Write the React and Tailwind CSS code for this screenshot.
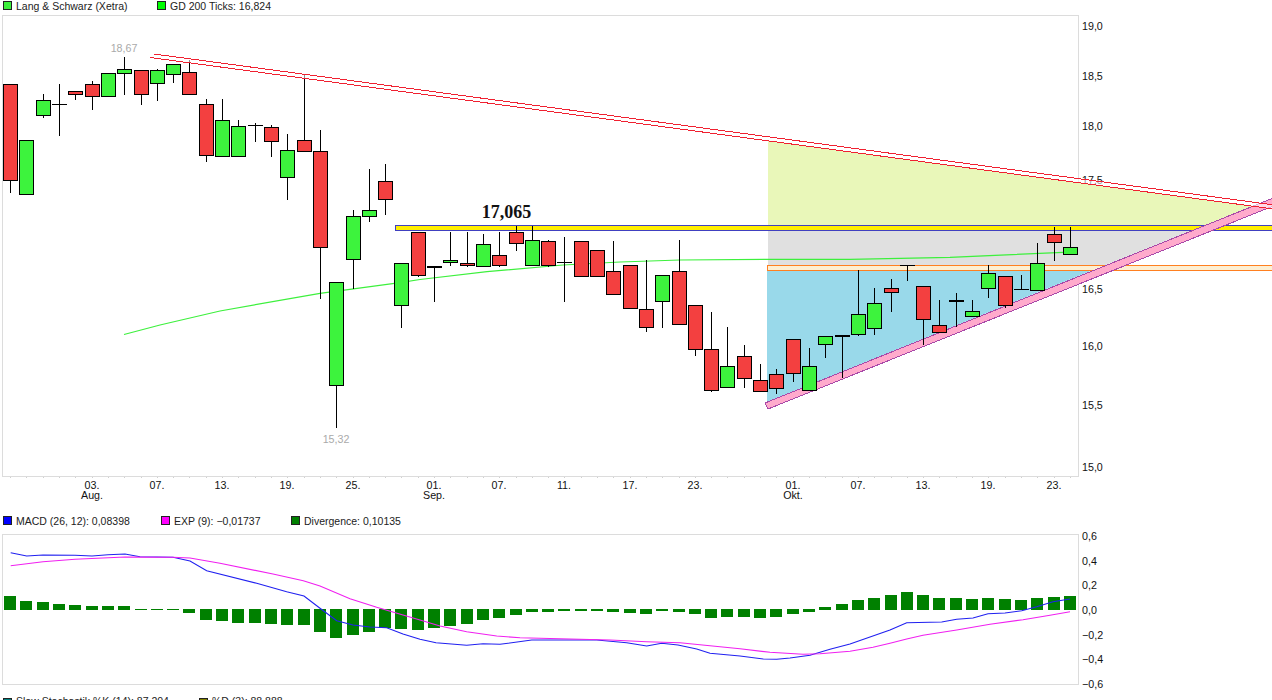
// Chartbild: Kerzen, Trendlinien und MACD
const CANDLES = [
  // x, Docht oben, Körper oben, Körper unten, Docht unten, Farbe
  [10.5, 84, 84.5, 180.5, 193, "r"], [26.5, 140, 140.5, 194, 194, "g"], [43.5, 94, 100.5, 115.5, 118, "g"],
  [59.5, 84, 104.5, 104.5, 136, "d"], [75.5, 91, 91.5, 94.5, 100, "r"], [92.5, 81, 84.5, 96.5, 110, "r"],
  [108.5, 73, 73.5, 96.5, 97, "g"], [124.5, 56.5, 69.5, 73.5, 95, "g"], [141.5, 70, 70.5, 94.5, 105, "r"],
  [157.5, 69, 70.5, 83.5, 101, "g"], [173.5, 64, 64.5, 74.5, 83, "g"], [189.5, 60, 72.5, 94.5, 95, "r"],
  [206.5, 99, 104.5, 155.5, 162, "r"], [222.5, 99, 120.5, 156.5, 157, "g"], [238.5, 120, 126.5, 156.5, 157, "g"],
  [255.5, 123, 125.5, 125.5, 142, "d"], [271.5, 125, 127.5, 141.5, 157, "r"], [287.5, 134, 150.5, 177.5, 200, "g"],
  [304.5, 75, 140.5, 151.5, 152, "r"], [320.5, 130, 151.5, 247.5, 299, "r"], [336.5, 282, 282.5, 385.5, 427.5, "g"],
  [353.5, 210, 216.5, 259.5, 289, "g"], [369.5, 169, 210.5, 216.5, 222, "g"], [385.5, 164, 181.5, 199.5, 215, "r"],
  [401.5, 263, 263.5, 305.5, 328, "g"], [418.5, 232, 232.5, 275.5, 277, "r"], [434.5, 266, 266.5, 267.5, 302, "d"],
  [450.5, 232, 260.5, 262.5, 266, "g"], [467.5, 232, 263.5, 265.5, 267, "r"], [483.5, 234, 244.5, 266.5, 267, "g"],
  [499.5, 232, 255.5, 265.5, 267, "r"], [516.5, 226, 232.5, 243.5, 251, "r"], [532.5, 226, 240.5, 265.5, 266, "g"],
  [548.5, 240, 241.5, 265.5, 267, "r"], [564.5, 237, 262.5, 262.5, 302, "d"], [581.5, 241, 241.5, 276.5, 277, "r"],
  [597.5, 250, 250.5, 276.5, 277, "r"], [613.5, 241, 271.5, 294.5, 295, "r"], [630.5, 265, 265.5, 308.5, 309, "r"],
  [646.5, 260, 309.5, 327.5, 332, "r"], [662.5, 275, 275.5, 301.5, 328, "g"], [679.5, 240, 271.5, 324.5, 325, "r"],
  [695.5, 305, 305.5, 349.5, 356, "r"], [711.5, 312, 349.5, 390.5, 392, "r"], [727.5, 327, 366.5, 387.5, 388, "g"],
  [744.5, 345, 356.5, 378.5, 388, "r"], [760.5, 364, 380.5, 391.5, 392, "r"], [776.5, 369, 374.5, 388.5, 394, "r"],
  [793.5, 339, 339.5, 373.5, 382, "r"], [809.5, 348, 366.5, 390.5, 391, "g"], [825.5, 336, 336.5, 344.5, 358, "g"],
  [842.5, 335, 335, 336.5, 378, "d"], [858.5, 270, 314.5, 334.5, 336, "g"], [874.5, 288, 303.5, 328.5, 334.5, "g"],
  [891.5, 279, 288.5, 292.5, 312, "r"], [907.5, 265, 265.5, 265.5, 281, "d"], [923.5, 286, 286.5, 319.5, 345, "r"],
  [939.5, 300, 325.5, 332.5, 333, "r"], [956.5, 293, 300.5, 301.5, 327, "d"], [972.5, 300, 311.5, 316.5, 317, "g"],
  [988.5, 265, 273.5, 288.5, 298, "g"], [1005.5, 276, 276.5, 305.5, 308, "r"], [1021.5, 275, 289.5, 289.5, 290, "d"],
  [1037.5, 243, 263.5, 290.5, 291, "g"], [1054.5, 227, 234.5, 242.5, 261, "r"], [1070.5, 227, 247.5, 254.5, 255, "g"],
];

// oberes bzw. unteres Ende jedes Balkens (Nulllinie bei 610)
const BARS = [
  596, 601, 602, 604, 605, 606, 606, 606, 610, 610, 610, 613, 620, 621, 623, 623, 624, 625, 625, 632, 638, 635, 632,
  628, 629, 630, 628, 626, 624, 620, 618, 615, 612, 612, 611, 611, 611, 612, 613, 614, 611, 612, 614, 618, 617, 617,
  618, 617, 614, 612, 607, 604, 600, 598, 595, 592, 595, 598, 598, 599, 598, 599, 600, 598, 597, 596,
];

const GD = "124,334.5 160,325 220,311 320,293.3 400,282.7 420,279.5 487,271.7 563,265 620,262 680,260 767,259.3 850,259.3 950,257.3 1063,252.3";
const MACD = "10.7,552.7 26.7,556 43,555 75,555.3 92,556 108,554.7 125,554 140,556.7 173,557.3 190,561 206.7,570.7 256.7,583.3 286.7,591.7 304,596 320,608.3 336.7,620.7 353,625 370,627 386.7,627.7 403,634 420,639.3 436,642.7 466.7,645.3 483,643.7 500,644.3 531.7,640 596.7,640 626.7,642.7 646.7,646 661.7,643.3 678,645 696.7,649 710,653.3 740,656 763.3,659 776.7,659.3 790,658 810,655.3 830,649.3 850,644 890,630 906.7,622.7 941.7,622 956.7,619.3 973,618 988,613.7 1005,613 1021.7,610.7 1036.7,606.7 1053,601.7 1070,599";
const EXP = "10.7,565.7 43,561.7 75,559.3 125,557 173,557.3 190,558 220,563.3 273,574 303.3,580.7 320,586 350,598.7 376.7,607.3 403,615 420,620 440,626 466.7,631.7 496.7,636 520,637.7 560,638.7 610,640 646.7,641.7 680,642.7 710,645.7 740,648.7 770,652.3 803,654.3 820,653.7 850,651.3 873,647.3 890,643.3 906.7,639 923,635.3 956.7,630 990,624.3 1023,619.7 1050,615.3 1070,611.7";

const X_LABELS = [
  [92, "03.", "Aug."], [157, "07."], [222, "13."], [287, "19."], [353, "25."], [434, "01.", "Sep."], [499, "07."],
  [564, "11."], [630, "17."], [695, "23."], [793, "01.", "Okt."], [858, "07."], [923, "13."], [988, "19."], [1054, "23."],
];
const Y_LABELS = [
  ["19,0", 30], ["18,5", 80], ["18,0", 130], ["17,5", 184], ["17,0", 237], ["16,5", 293], ["16,0", 350], ["15,5", 409], ["15,0", 471],
];
const MACD_LABELS = [
  ["0,6", 540], ["0,4", 565], ["0,2", 589], ["0,0", 614], ["−0,2", 639], ["−0,4", 663], ["−0,6", 688],
];

function Candle({ c }) {
  const [x, top, bodyTop, bodyBottom, bottom, kind] = c;
  if (kind === "d") {
    return (
      <g stroke="#000" strokeWidth="1" shapeRendering="crispEdges">
        <line x1={x} x2={x} y1={top} y2={bottom} />
        <line x1={x - 7.5} x2={x + 7.5} y1={bodyTop} y2={bodyTop} />
        {bodyBottom !== bodyTop && <line x1={x - 7.5} x2={x + 7.5} y1={bodyBottom} y2={bodyBottom} />}
      </g>
    );
  }
  return (
    <g stroke="#000" strokeWidth="1" shapeRendering="crispEdges">
      <line x1={x} x2={x} y1={top} y2={bottom} />
      <rect
        x={x - 7}
        y={bodyTop}
        width="14"
        height={bodyBottom - bodyTop}
        fill={kind === "r" ? "#f34040" : "#3df33d"}
      />
    </g>
  );
}

function LegendItem({ color, label, width }) {
  return (
    <div className="flex items-start" style={{ width }}>
      <span className="w-[9px] h-[9px] mt-[1px] border border-[#222] mr-1 shrink-0" style={{ background: color }}></span>
      <span className="whitespace-nowrap mt-[1px]">{label}</span>
    </div>
  );
}

function AxisText({ x, y, children, ...rest }) {
  return (
    <text x={x} y={y} fontSize="10.7" fill="#111" {...rest}>
      {children}
    </text>
  );
}

function PriceChart() {
  return (
    <svg width="1272" height="497" viewBox="0 15 1272 497" className="block">
      <rect x="2.5" y="15.5" width="1076" height="461" fill="#fff" stroke="#dcdcdc" />
      {CANDLES.map((c) => (
        <line key={c[0]} x1={c[0]} x2={c[0]} y1="477" y2="478" stroke="#d0d0d0" shapeRendering="crispEdges" />
      ))}

      {X_LABELS.map(([x, day, month]) => (
        <g key={x}>
          <AxisText x={x} y={489} textAnchor="middle">{day}</AxisText>
          {month && <AxisText x={x} y={499} textAnchor="middle">{month}</AxisText>}
        </g>
      ))}
      {Y_LABELS.map(([t, y]) => (
        <AxisText key={t} x={1082} y={y}>{t}</AxisText>
      ))}

      <polygon points="768,141 1253,206 1206,225 768,225" fill="#e9f7b9" />
      <polygon points="768,231 1191,231 1106,265 768,265" fill="#e0e0e0" />
      <polygon points="767,271 1091,271 767,402" fill="#99d9ea" />

      <polyline points={GD} fill="none" stroke="#3df03d" strokeWidth="1.2" />

      {/* Widerstand 17,065 */}
      <rect x="395.5" y="225.5" width="880" height="5" fill="#ffee00" stroke="#4040c0" shapeRendering="crispEdges" />
      {/* Unterstützung */}
      <rect x="767.5" y="265.5" width="510" height="5" fill="#fdefd2" stroke="#ff8020" shapeRendering="crispEdges" />
      {/* Trendkanal steigend */}
      <polygon
        points="765,403 1272,198.5 1272,206.5 768,409"
        fill="#ffaacc"
        stroke="#a848a8"
        strokeWidth="1"
        shapeRendering="crispEdges"
      />

      {CANDLES.map((c) => (
        <Candle key={c[0]} c={c} />
      ))}

      {/* Trendkanal fallend */}
      <polygon points="154,54 1272,204.7 1272,208.8 150,57.5" fill="#fff" fillOpacity="0.55" />
      <g stroke="#f02030" strokeWidth="1" shapeRendering="crispEdges">
        <line x1="154" y1="54" x2="1272" y2="204.7" />
        <line x1="150" y1="57.5" x2="1272" y2="208.8" />
      </g>

      <text x="124" y="52" fontSize="10.7" fill="#aaa" textAnchor="middle">18,67</text>
      <text x="336" y="443" fontSize="10.7" fill="#aaa" textAnchor="middle">15,32</text>
      <text x="506.5" y="218" fontSize="18" fontWeight="700" fill="#111" textAnchor="middle" fontFamily="'Liberation Serif', serif">
        17,065
      </text>
    </svg>
  );
}

function MacdChart() {
  return (
    <svg width="1272" height="166" viewBox="0 530 1272 166" className="block">
      <rect x="2.5" y="534.5" width="1076" height="150" fill="#fff" stroke="#dcdcdc" />
      {BARS.map((v, i) => {
        const x = CANDLES[i][0];
        const top = v < 610 ? v : 609;
        const bottom = v < 610 ? 610 : v;
        return <rect key={x} x={x - 6.5} y={top} width="12" height={bottom - top} fill="#008000" shapeRendering="crispEdges" />;
      })}
      <polyline points={MACD} fill="none" stroke="#2020f0" strokeWidth="1.1" />
      <polyline points={EXP} fill="none" stroke="#f020f0" strokeWidth="1.1" />
      {MACD_LABELS.map(([t, y]) => (
        <AxisText key={t} x={1082} y={y}>{t}</AxisText>
      ))}
    </svg>
  );
}

export default function App() {
  return (
    <div className="w-[1272px] h-[700px] overflow-hidden bg-white font-['Liberation_Sans',Arial,sans-serif] text-[10.5px] leading-[11px] text-[#222]">
      <div className="flex h-[15px] pl-[3px]">
        <LegendItem color="#3df03d" label="Lang & Schwarz (Xetra)" width={154} />
        <LegendItem color="#00ff00" label="GD 200 Ticks: 16,824" />
      </div>
      <PriceChart />
      <div className="flex h-[18px] pl-[3px] pt-[3px]">
        <LegendItem color="#0000ff" label="MACD (26, 12): 0,08398" width={158} />
        <LegendItem color="#ff00ff" label="EXP (9): −0,01737" width={130} />
        <LegendItem color="#008000" label="Divergence: 0,10135" />
      </div>
      <MacdChart />
      <div className="flex h-[11px] pl-[3px]">
        <div className="flex items-start w-[196px]">
          <span className="w-[9px] h-[9px] mt-[2px] border border-[#222] bg-[#008080] mr-1 shrink-0"></span>
          <span className="whitespace-nowrap">Slow Stochastik %K (14): 87,204</span>
        </div>
        <div className="flex items-start">
          <span className="w-[9px] h-[9px] mt-[2px] border border-[#222] bg-[#808000] mr-1 shrink-0"></span>
          <span className="whitespace-nowrap">%D (3): 88,888</span>
        </div>
      </div>
    </div>
  );
}
